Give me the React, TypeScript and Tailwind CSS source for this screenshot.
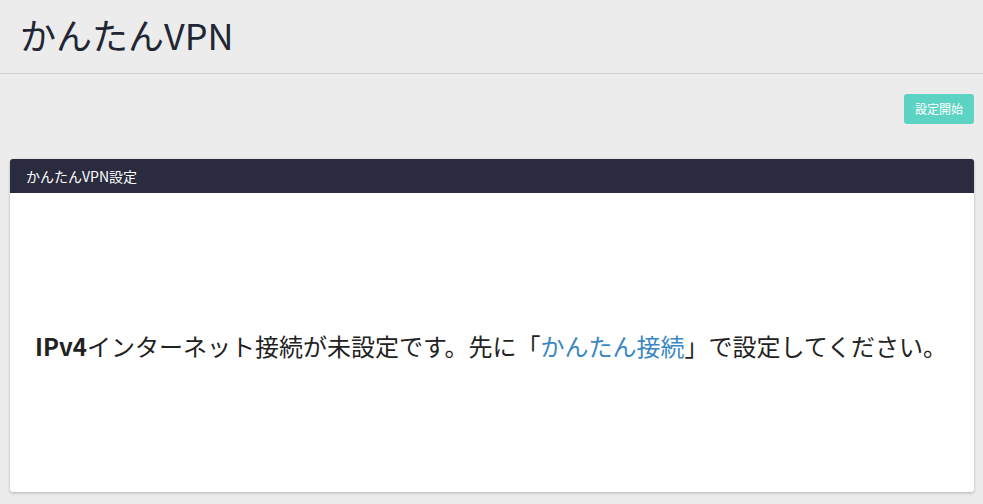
export default function App() {
  return (
    <div
      className="min-h-[504px] bg-[#ececec] text-[#222]"
      style={{ fontFamily: '"Noto Sans CJK JP", "Noto Sans", sans-serif' }}
    >
      <header className="h-[74px] border-b border-[#cfcfcf] pl-[20px] flex items-center">
        <h1 className="text-[36px] leading-none font-normal text-[#222533] -mt-[6px]">
          かんたんVPN
        </h1>
      </header>

      <div className="pl-[10px] pr-[9px]">
        <div className="flex justify-end pt-[20px]">
          <button className="h-[30px] w-[70px] rounded-[3px] bg-[#5dd3c3] text-white text-[12px] leading-none">
            設定開始
          </button>
        </div>

        <section className="mt-[35px] rounded-[3px] bg-white shadow-[0_1px_3px_rgba(0,0,0,0.25)] overflow-hidden">
          <div className="h-[34px] bg-[#2a2b3e] text-white text-[14px] pl-[16px] flex items-center">
            かんたんVPN設定
          </div>
          <div className="h-[299px] flex items-center pl-[25px] pt-[6px]">
            <p className="text-[24px] leading-none text-[#222]">
              <span className="font-bold">IPv4</span>
              インターネット接続が未設定です。先に「
              <a href="#" className="text-[#3a87c4]">
                かんたん接続
              </a>
              」で設定してください。
            </p>
          </div>
        </section>
      </div>
    </div>
  );
}
